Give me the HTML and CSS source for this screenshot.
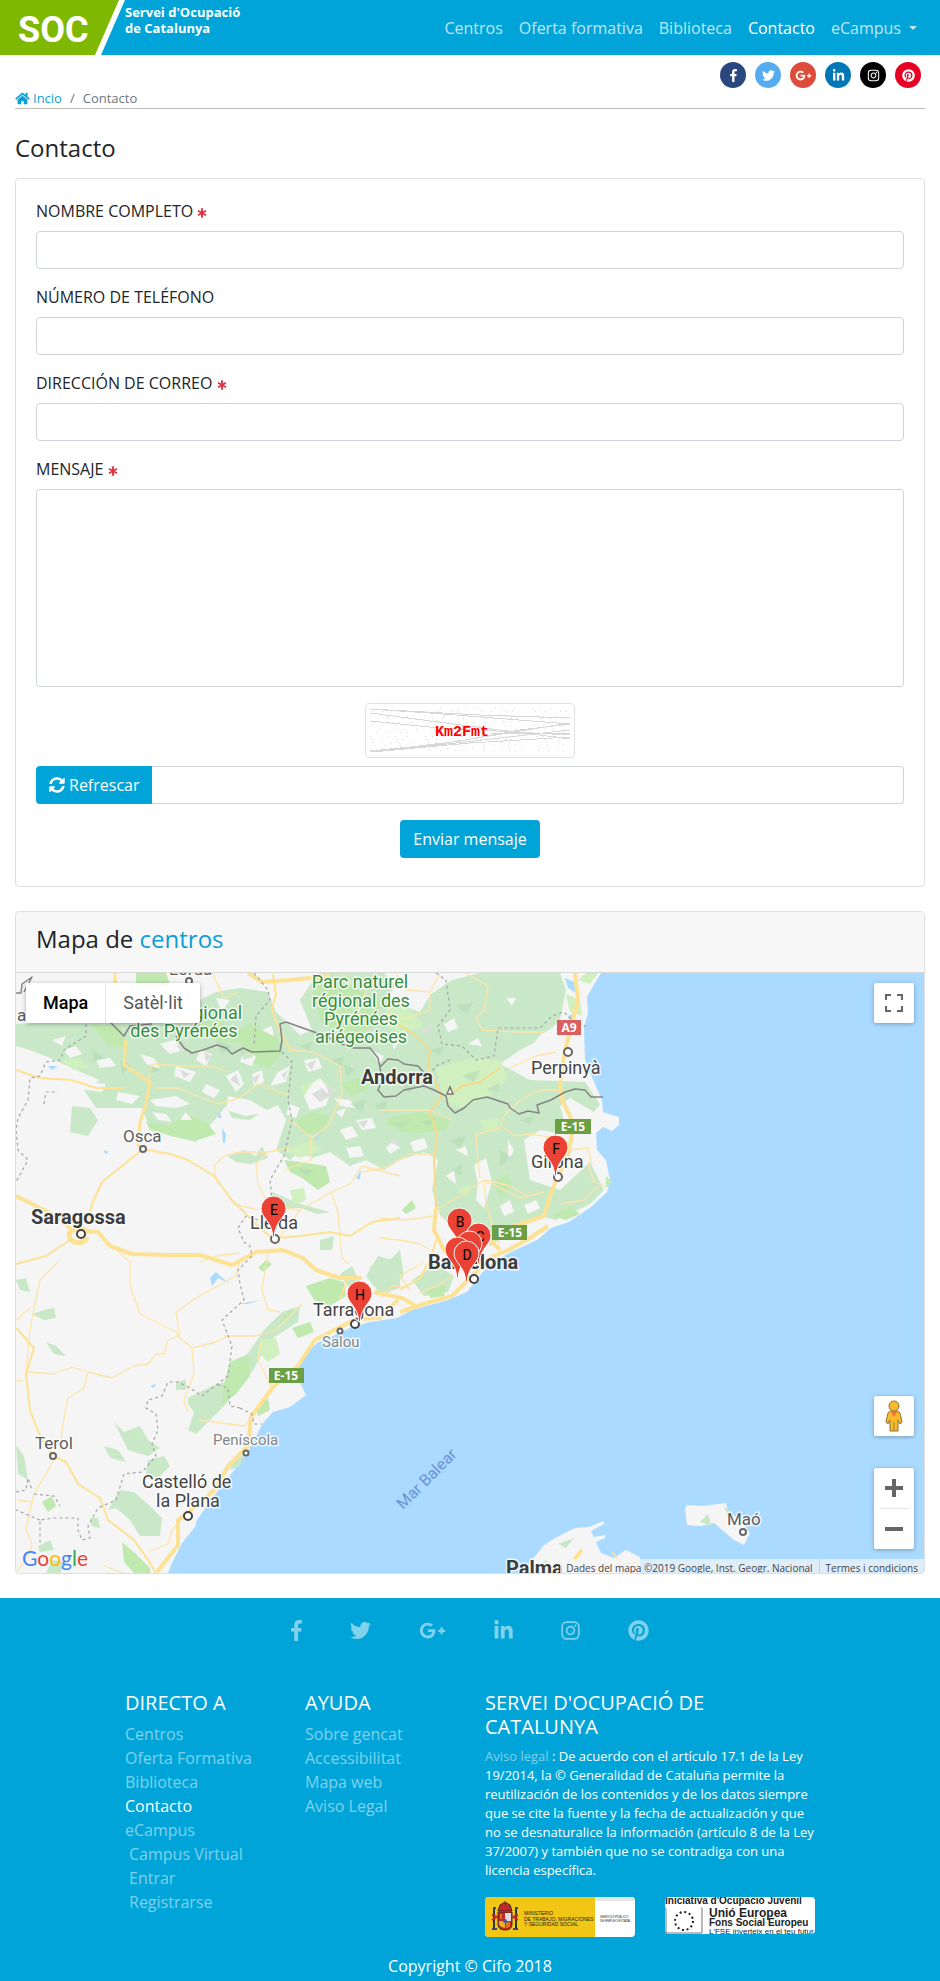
FILE: index.html
```html
<!DOCTYPE html>
<html lang="es">
<head>
<meta charset="utf-8">
<meta name="viewport" content="width=device-width, initial-scale=1">
<title>Contacto</title>
<link rel="stylesheet" href="styles.css">
</head>
<body>
<svg class="sprite" aria-hidden="true">
  <symbol id="i-facebook" viewBox="0 0 264 512"><path d="M76.7 512V283H0v-91h76.7v-71.7C76.7 42.4 124.3 0 193.8 0c33.3 0 61.9 2.5 70.2 3.6V85h-48.2c-37.8 0-45.1 18-45.1 44.3V192H256l-11.7 91h-73.6v229"/></symbol>
  <symbol id="i-twitter" viewBox="0 0 512 512"><path d="M459.37 151.716c.325 4.548.325 9.097.325 13.645 0 138.72-105.583 298.558-298.558 298.558-59.452 0-114.68-17.219-161.137-47.106 8.447.974 16.568 1.299 25.34 1.299 49.055 0 94.213-16.568 130.274-44.832-46.132-.975-84.792-31.188-98.112-72.772 6.498.974 12.995 1.624 19.818 1.624 9.421 0 18.843-1.3 27.614-3.573-48.081-9.747-84.143-51.98-84.143-102.985v-1.299c13.969 7.797 30.214 12.67 47.431 13.319-28.264-18.843-46.781-51.005-46.781-87.391 0-19.492 5.197-37.36 14.294-52.954 51.655 63.675 129.3 105.258 216.365 109.807-1.624-7.797-2.599-15.918-2.599-24.04 0-57.828 46.782-104.934 104.934-104.934 30.213 0 57.502 12.67 76.67 33.137 23.715-4.548 46.456-13.32 66.599-25.34-7.798 24.366-24.366 44.833-46.132 57.827 21.117-2.273 41.584-8.122 60.426-16.243-14.292 20.791-32.161 39.308-52.628 54.253z"/></symbol>
  <symbol id="i-google" viewBox="0 0 640 512"><path d="M386.061 228.496c1.834 9.692 3.143 19.384 3.143 31.956C389.204 370.205 315.599 448 204.8 448c-106.084 0-192-85.915-192-192s85.916-192 192-192c51.864 0 95.083 18.859 128.611 50.292l-52.126 50.03c-14.145-13.621-39.028-29.599-76.485-29.599-65.484 0-118.92 54.221-118.92 121.277 0 67.056 53.436 121.277 118.92 121.277 75.961 0 104.513-54.745 108.965-82.773H204.8v-66.009h181.261zm185.406 6.437V179.2h-56.001v55.733h-55.733v56.001h55.733v55.733h56.001v-55.733H627.2v-56.001h-55.733z"/></symbol>
  <symbol id="i-linkedin" viewBox="0 0 448 512"><path d="M100.28 448H7.4V148.9h92.88zM53.79 108.1C24.09 108.1 0 83.5 0 53.8a53.79 53.79 0 0 1 107.58 0c0 29.7-24.1 54.3-53.79 54.3zM447.9 448h-92.68V302.4c0-34.7-.7-79.2-48.29-79.2-48.29 0-55.69 37.7-55.69 76.7V448h-92.78V148.9h89.08v40.8h1.3c12.4-23.5 42.69-48.3 87.88-48.3 94 0 111.28 61.9 111.28 142.3V448z"/></symbol>
  <symbol id="i-instagram" viewBox="0 0 448 512"><path d="M224.1 141c-63.6 0-114.9 51.3-114.9 114.9s51.3 114.9 114.9 114.9S339 319.5 339 255.9 287.7 141 224.1 141zm0 189.6c-41.1 0-74.7-33.5-74.7-74.7s33.5-74.7 74.7-74.7 74.7 33.5 74.7 74.7-33.6 74.7-74.7 74.7z"/><circle cx="343.7" cy="136.3" r="26.8"/><rect x="20" y="52" width="408" height="408" rx="110" fill="none" stroke="currentColor" stroke-width="40"/></symbol>
  <symbol id="i-pinterest" viewBox="0 0 496 512"><path d="M496 256c0 137-111 248-248 248-25.6 0-50.2-3.9-73.4-11.1 10.1-16.5 25.2-43.5 30.8-65 3-11.6 15.4-59 15.4-59 8.1 15.4 31.7 28.5 56.8 28.5 74.8 0 128.7-68.8 128.7-154.3 0-81.9-66.9-143.2-152.9-143.2-107 0-163.9 71.8-163.9 150.1 0 36.4 19.4 81.7 50.3 96.1 4.7 2.2 7.2 1.2 8.3-3.3.8-3.4 5-20.3 6.9-28.1.6-2.5.3-4.7-1.7-7.1-10.1-12.5-18.3-35.3-18.3-56.6 0-54.7 41.4-107.6 112-107.6 60.9 0 103.6 41.5 103.6 100.9 0 67.1-33.9 113.6-78 113.6-24.3 0-42.6-20.1-36.7-44.8 7-29.5 20.5-61.3 20.5-82.6 0-19-10.2-34.9-31.4-34.9-24.9 0-44.9 25.7-44.9 60.2 0 22 7.4 36.8 7.4 36.8s-24.5 103.8-29 123.2c-5 21.4-3 51.6-.9 71.2C65.4 450.9 0 361.1 0 256 0 119 111 8 248 8s248 111 248 248z"/></symbol>
  <symbol id="i-home" viewBox="0 0 576 512"><path d="M280.37 148.26L96 300.11V464a16 16 0 0 0 16 16l112.06-.29a16 16 0 0 0 15.92-16V368a16 16 0 0 1 16-16h64a16 16 0 0 1 16 16v95.64a16 16 0 0 0 16 16.05L464 480a16 16 0 0 0 16-16V300L295.67 148.26a12.19 12.19 0 0 0-15.3 0zM571.6 251.47L488 182.56V44.05a12 12 0 0 0-12-12h-56a12 12 0 0 0-12 12v72.61L318.47 43a48 48 0 0 0-61 0L4.34 251.47a12 12 0 0 0-1.6 16.9l25.5 31A12 12 0 0 0 45.15 301l235.22-193.74a12.19 12.19 0 0 1 15.3 0L530.9 301a12 12 0 0 0 16.9-1.6l25.5-31a12 12 0 0 0-1.7-16.93z"/></symbol>
  <symbol id="i-sync" viewBox="0 0 512 512"><path d="M370.72 133.28C339.458 104.008 298.888 87.962 255.848 88c-77.458.068-144.328 53.178-162.791 126.85-1.344 5.363-6.122 9.15-11.651 9.15H24.103c-7.498 0-13.194-6.807-11.807-14.176C33.933 94.924 134.813 8 256 8c66.448 0 126.791 26.136 171.315 68.685L463.03 40.97C478.149 25.851 504 36.559 504 57.941V192c0 13.255-10.745 24-24 24H345.941c-21.382 0-32.09-25.851-16.971-40.971l41.75-41.749zM32 296h134.059c21.382 0 32.09 25.851 16.971 40.971l-41.75 41.75c31.262 29.273 71.835 45.319 114.876 45.28 77.418-.07 144.315-53.144 162.787-126.849 1.344-5.363 6.122-9.15 11.651-9.15h57.304c7.498 0 13.194 6.807 11.807 14.176C478.067 417.076 377.187 504 256 504c-66.448 0-126.791-26.136-171.315-68.685L48.97 471.03C33.851 486.149 8 475.441 8 454.059V320c0-13.255 10.745-24 24-24z"/></symbol>
  <symbol id="i-asterisk" viewBox="0 0 10 10"><path d="M5 0.3V9.7M1 2.7L9 7.3M9 2.7L1 7.3" fill="none" stroke="currentColor" stroke-width="1.9"/></symbol>
  <symbol id="pin" viewBox="0 0 27 43"><path d="M13.500 1A12.500 12.500 0 0 1 26 13.500C26 23 14.800 26 14.200 42H12.800C12.200 26 1 23 1 13.500A12.500 12.500 0 0 1 13.500 1z" fill="#ea4335" stroke="#fff" stroke-width="1"/></symbol>
</svg>

<header class="header">
  <a class="brand" href="#" aria-label="Servei d'Ocupació de Catalunya">
    <svg class="brand-mark" viewBox="0 0 125 55" aria-hidden="true">
      <path d="M0 0H125L101 55H0z" fill="#fff"/><path d="M0 0H119L95 55H0z" fill="#7fb800"/>
      <text x="18" y="42" class="brand-soc">SOC</text>
    </svg>
    <span class="brand-name">Servei d'Ocupació<br>de Catalunya</span>
  </a>
  <nav class="nav">
    <a href="#">Centros</a>
    <a href="#">Oferta formativa</a>
    <a href="#">Biblioteca</a>
    <a href="#" class="active">Contacto</a>
    <a href="#" class="dropdown">eCampus</a>
  </nav>
</header>

<main class="page">
  <div class="social">
    <a href="#" class="fb" aria-label="Facebook"><svg><use href="#i-facebook"/></svg></a>
    <a href="#" class="tw" aria-label="Twitter"><svg><use href="#i-twitter"/></svg></a>
    <a href="#" class="gp" aria-label="Google+"><svg><use href="#i-google"/></svg></a>
    <a href="#" class="li" aria-label="LinkedIn"><svg><use href="#i-linkedin"/></svg></a>
    <a href="#" class="ig" aria-label="Instagram"><svg><use href="#i-instagram"/></svg></a>
    <a href="#" class="pt" aria-label="Pinterest"><svg><use href="#i-pinterest"/></svg></a>
  </div>
  <nav class="breadcrumb" aria-label="Ruta">
    <a href="#"><svg><use href="#i-home"/></svg>Incio</a><span>/</span><span>Contacto</span>
  </nav>
  <h1 class="title">Contacto</h1>

  <form class="card form">
    <div class="group"><label for="nombre">NOMBRE COMPLETO <svg class="req"><use href="#i-asterisk"/></svg></label><input id="nombre" type="text" required></div>
    <div class="group"><label for="tel">NÚMERO DE TELÉFONO</label><input id="tel" type="tel"></div>
    <div class="group"><label for="correo">DIRECCIÓN DE CORREO <svg class="req"><use href="#i-asterisk"/></svg></label><input id="correo" type="email" required></div>
    <div class="group"><label for="mensaje">MENSAJE <svg class="req"><use href="#i-asterisk"/></svg></label><textarea id="mensaje" required></textarea></div>
    <div class="captcha">
      <svg viewBox="0 0 200 45" role="img" aria-label="Captcha">
        <g fill="none" stroke="#d8d8d8" stroke-width="1" shape-rendering="crispEdges">
          <path d="M0 1L110 7L200 10M0 1L60 5L200 16M0 5L60 13L200 31M0 13L70 20L200 27M0 43L70 36L200 15M0 44L60 38L200 22M2 44L100 35L200 29M0 44L90 33L150 22L200 16M120 25H200"/>
        </g>
        <g fill="none" stroke="#dadada" stroke-width="1" shape-rendering="crispEdges">
          <path stroke-dasharray="1 9 1 14 1 5 1 22" d="M3 3H198M8 10H198M1 17H196M6 24H198M2 31H198M5 37H198M60 42H198"/>
          <path stroke-dasharray="1 17 1 6 1 11" d="M70 0H190M0 8H198M4 14H150M9 21H198M0 28H198M3 34H198M40 40H198"/>
        </g>
        <text x="65" y="28" class="captcha-text">Km2Fmt</text>
      </svg>
    </div>
    <div class="input-row">
      <button type="button" class="btn"><svg><use href="#i-sync"/></svg>Refrescar</button>
      <input type="text" aria-label="Texto del captcha">
    </div>
    <button type="submit" class="btn send">Enviar mensaje</button>
  </form>

  <section class="card map-card">
    <h2 class="map-title">Mapa de <a href="#">centros</a></h2>
    <div class="map">
      <svg class="map-canvas" viewBox="16 973 908 600" preserveAspectRatio="xMidYMid slice" role="img" aria-label="Mapa de Catalunya">
        <rect x="-500" y="973" width="1900" height="600" fill="#aadaff"/>
        <path fill="#f5f5f5" d="M-500 973H601L592 988L587 997L588 1013L584 1027L585 1060L594 1082L602 1100L603 1112L619 1117V1125L612 1131L603 1127L596 1133L597 1150L606 1160L610 1180L607 1192L591 1207L569 1222L551 1228L537 1240L509 1253L491 1263L482 1273L467 1292L448 1300L412 1310L397 1318L370 1322L350 1328L333 1336L317 1343L305 1354L297 1370L302 1387L306 1395L290 1407L273 1412L263 1423L247 1453L232 1473L213 1497L197 1520L195 1527L182 1543L172 1563L168 1573H-500z"/>
        <path fill="#f5f5f5" d="M523 1573L532 1560L544 1545L555 1538L575 1528L589 1527L604 1521V1524L591 1531L594 1537L605 1535V1538L596 1542L601 1553L614 1558L626 1550L640 1557V1573zM685 1508L687 1505L703 1506L726 1503L728 1512L741 1520L750 1533L744 1545L734 1540L714 1523L701 1526L687 1525z"/>
        <!-- woodland -->
        <g fill="#c8e8c8">
          <path d="M16 1024L60 1022L110 1015L170 1010L200 1000L216 992L240 988L268 992L276 1012L300 1035L312 1030L300 1000L318 973H384L395 985L386 1000L420 1012L430 995L452 980L480 973H560L566 990L560 1020L540 1040L520 1050L500 1064L530 1080L585 1082L600 1104L594 1112L570 1098L560 1106L568 1135L540 1130L524 1140L530 1180L560 1190L590 1162L604 1190L590 1204L556 1220L540 1216L520 1228L490 1246L476 1228L462 1236L440 1215L432 1190L438 1160L424 1152L400 1160L384 1170L366 1160L350 1166L330 1152L312 1158L300 1150L290 1160L276 1150L286 1120L278 1105L262 1112L250 1120L232 1118L226 1106L208 1128L196 1142L170 1136L148 1124L142 1108L96 1108L84 1090L100 1080L76 1070L50 1058L30 1050L16 1046z"/>
          <path d="M72 1106L90 1108L98 1120L88 1136L70 1132zM228 1156L244 1150L256 1156L262 1146L268 1158L250 1164L236 1162zM272 1192L300 1204L330 1212L318 1214L300 1208L276 1208zM16 1280L26 1278L30 1292L20 1290zM32 1314L44 1310L54 1308L56 1318L44 1320zM46 1342L56 1346L66 1356L54 1354zM114 1422L124 1432L140 1426L148 1440L160 1448L148 1456L128 1450zM104 1446L118 1450L126 1462L110 1458zM148 1460L164 1456L170 1466L158 1478L146 1474zM120 1490L134 1492L150 1506L162 1518L160 1536L140 1536L130 1520L116 1508L108 1510zM90 1518L98 1518L100 1528L92 1526zM16 1445L24 1456L28 1480L18 1474zM188 1398L212 1386L232 1380L246 1356L264 1330L282 1312L300 1306L298 1322L270 1340L252 1372L224 1406L196 1434L188 1430L194 1412L188 1404zM370 1266L392 1258L400 1250L404 1276L388 1294L374 1280zM412 1280L436 1264L454 1276L448 1292L424 1296zM232 1464L246 1452L240 1466L230 1470zM176 1382L186 1380V1390L176 1390zM38 1546L50 1540L54 1550L40 1552zM52 1560L66 1562L60 1573H46zM340 1274L352 1266L360 1282L350 1290zM320 1240L334 1236L332 1250L320 1250zM366 1276L378 1256L400 1262V1288L380 1294zM724 1506L732 1514L728 1520zM700 1522L708 1514L712 1526zM558 1544L574 1538L566 1548zM532 1573L546 1560L552 1573z"/>
        </g>
        <!-- bright woodland -->
        <g fill="#bfe9ae">
          <path d="M92 1024L120 1026L128 1048L108 1046zM196 1024L220 1018L232 1034L250 1024L276 1036L284 1050L270 1068L250 1062L240 1044L216 1040L196 1032zM146 1122L170 1126L186 1114L206 1122L216 1134L198 1140L172 1136L150 1130zM284 1160L300 1162L326 1166L330 1182L318 1190L302 1178L290 1172zM312 985L340 980L380 1000L376 1024L350 1040L320 1020zM388 1118L420 1112L450 1120L446 1130L410 1134L388 1126zM494 1182L508 1174L512 1186L500 1198zM552 1216L570 1206L580 1214L566 1220zM306 1286L330 1278L344 1282L346 1296L330 1306L314 1300zM230 1362L248 1354L250 1376L236 1394L222 1404L224 1384zM256 1408L268 1398L270 1410L258 1416zM122 1542L136 1554L150 1568V1573H134L124 1562zM42 1502L52 1496L56 1506L48 1512zM258 1268L266 1260L272 1264L264 1272zM292 1328L310 1322L314 1332L298 1338zM428 1290L446 1284L444 1296L430 1298zM280 1320L292 1308L290 1318zM606 1176L612 1182L606 1188zM446 1214L460 1208L462 1224L450 1222zM402 1210L412 1200L416 1208L406 1214zM296 1120L312 1112L330 1116L322 1132L304 1134zM340 1084L358 1078L370 1088L352 1096zM136 973H166L170 984L150 992L136 984z"/>
        </g>
        <g fill="#d0f0c0">
          <path d="M436 1068L470 1058L500 1060L508 1078L490 1096L460 1108L444 1100zM300 1086L320 1078L336 1090L322 1104L306 1100zM480 1120L500 1118L496 1132L484 1130zM586 973H598L590 984L578 980zM290 1190L304 1188L306 1200L294 1206zM260 1340L276 1338L280 1354L268 1362L258 1352zM284 1150L312 1140L322 1150L300 1158zM456 1190L470 1184L468 1198zM60 1060L80 1058L90 1068L74 1070zM386 1004L410 1010L424 1026L400 1034L384 1024zM566 994L580 1000L582 1016L570 1012z"/>
        </g>
        <!-- clearings and peaks -->
        <g fill="#f5f5f5">
          <path d="M312 1084L320 1078L330 1092L326 1106L310 1110L304 1096zM226 1076L238 1070L244 1084L236 1092zM278 1072L290 1066L286 1082L270 1086zM200 1050L212 1054L206 1066L196 1060zM160 1044L174 1040L184 1050L170 1054zM150 1100L176 1096L190 1104L176 1108L156 1106zM118 1092L140 1096L132 1104L116 1100zM228 1096L250 1100L270 1112L246 1116L226 1110zM52 1040L66 1036L62 1046zM84 1082L106 1084L102 1092L86 1090zM340 1130L352 1126L358 1136L346 1140zM398 978L424 975L430 990L410 1004L396 996zM444 1024L454 1018L458 1028L448 1032zM506 998L516 998L512 1006zM540 1035L556 1026L576 1044L582 1062L566 1070L552 1058L530 1048zM522 1052L538 1050L534 1060zM568 1118L584 1110L594 1130L584 1142L592 1160L578 1158L572 1140zM474 1165L486 1158L492 1182L484 1208L476 1200L478 1184zM420 1168L434 1160L430 1180L412 1196L398 1200L404 1180zM508 1140L514 1150L508 1162zM524 1205L536 1200L540 1208L528 1214zM400 1224L420 1222L428 1240L420 1250L404 1240zM336 1112L346 1108L342 1118zM370 1050L384 1056L380 1064zM386 1148L394 1140L400 1148L390 1154zM262 1030L272 1026L274 1036zM216 998L230 1000L222 1012z"/>
          <path d="M140 1054L154 1058L160 1068L148 1066zM176 1066L196 1072L190 1082L174 1076zM206 1084L220 1090L214 1098L202 1092zM96 1060L110 1058L116 1066L100 1068zM64 1050L76 1046L82 1054L70 1058zM252 1074L262 1070L264 1082L254 1086zM290 1104L300 1108L296 1118L286 1114zM334 1098L350 1100L356 1108L340 1106zM356 1120L372 1118L376 1128L362 1130zM346 1148L360 1146L364 1156L350 1158zM180 1120L186 1112L192 1120zM152 1112L166 1114L172 1122L158 1120zM244 1052L256 1056L252 1066L240 1062zM304 1060L318 1058L322 1068L308 1072zM410 1142L424 1138L428 1148L414 1152zM456 1150L466 1146L468 1156zM500 1206L510 1200L514 1212L504 1216zM446 1176L454 1170L456 1184zM468 1044L478 1038L482 1046zM390 1034L400 1040L394 1050z"/>
        </g>
        <g fill="#dcdedc">
          <path d="M312 1094L322 1088L330 1096L320 1102zM230 1080L236 1074L240 1086zM390 1142L396 1138L398 1146zM282 1074L288 1070L284 1080zM204 1052L212 1056L206 1062zM420 1030L432 1026L428 1036zM176 1046L184 1044L182 1052zM252 1078L260 1074L256 1084zM306 1064L316 1060L312 1070zM180 1070L190 1074L184 1078zM358 1122L368 1120L364 1128zM326 1084L334 1090L330 1100z"/>
        </g>
        <g fill="#b4dab4" opacity=".6">
          <path d="M430 1050L444 1046L440 1056zM456 1006L474 1002L466 1014zM400 1080L416 1086L408 1094zM350 1104L366 1100L362 1112zM450 1140L466 1136L460 1148zM500 1150L512 1158L500 1166zM330 1060L344 1056L342 1066zM240 1050L254 1056L244 1060zM92 1050L104 1058L94 1062zM148 1064L162 1070L150 1074zM520 1120L534 1116L530 1124zM452 1170L462 1164L462 1176zM462 1076L480 1070L474 1082zM486 1090L500 1082L498 1092zM392 1124L410 1120L402 1128zM420 1122L436 1118L430 1126zM216 1040L232 1046L222 1054zM120 1060L132 1066L122 1074zM300 1046L312 1042L310 1052zM344 1064L356 1070L346 1076zM374 1106L388 1100L384 1112zM298 1168L314 1170L306 1176zM320 1008L334 1002L330 1014zM350 1020L366 1014L360 1026z"/>
        </g>
        <g fill="#aadaff">
          <path d="M48 1066H58L52 1070zM222 1128L226 1134L225 1143H223zM219 1112L222 1118L218 1118zM316 1138L320 1132L318 1140zM356 1178L361 1170L360 1180zM104 1150L109 1152L105 1154zM210 1278L216 1272L220 1276L230 1284L218 1278L212 1286zM240 1304L260 1300L248 1304zM150 1386L156 1384L154 1388zM565 978L574 982L578 994L568 988zM568 1016L573 1014L572 1026z"/>
        </g>
        <!-- minor roads -->
        <g fill="none" stroke="#fde5a8" stroke-width="1.300" stroke-linejoin="round">
          <path d="M148 1080L152 1064L180 1066L212 1066L228 1072M155 1088L178 1088L192 1094L218 1104L240 1098L258 1084L290 1096M212 973L224 998L238 992M290 1050L314 1052L340 1066L342 1092L330 1124L312 1138L290 1120M214 1166L224 1156L240 1152L268 1152L290 1148M268 1152L256 1164L258 1184L270 1206L300 1210M214 1166L216 1178L234 1204L258 1210M300 1210L332 1192L350 1184L362 1166L400 1176M311 1138V1160L284 1170M332 1194L338 1212L342 1258L348 1264M300 1210L290 1224L280 1236M240 1253L216 1256L200 1262M268 1252L262 1290L268 1310L280 1312M58 1262L40 1280L34 1308L30 1330L26 1373M97 1232L122 1255L130 1262V1285L140 1314L176 1332L180 1338L192 1348L216 1342L228 1336M180 1338L176 1312L196 1298L214 1288L236 1276L240 1260M192 1348L194 1374L184 1400L188 1412M16 1320L30 1308M16 1381H22M28 1372L54 1374L72 1367L88 1372L112 1378L134 1366L148 1364L156 1354L164 1354L168 1340L178 1336M88 1372L84 1388L68 1398L62 1430L60 1450M54 1460L34 1494L32 1502L18 1500M32 1502L26 1530L32 1544L28 1556L16 1573M200 1420L244 1426L250 1420M224 1336L256 1336L276 1330L302 1304M262 1338L258 1360L272 1388M148 1552L168 1544L172 1530L184 1516M104 1566L124 1573"/>
          <path d="M396 973L406 990L430 992L440 973M430 992V1010L400 1020L388 1014M466 973L488 986L484 1010L476 1018L482 1030L518 1032L546 1032M452 1120L430 1110L400 1110L380 1110M476 1134L478 1160L480 1178M476 1134L500 1128L504 1116L520 1100L540 1090L560 1090M504 1128L516 1136L530 1134L556 1138M434 1154L410 1154L384 1168L362 1172M380 1218L404 1220L434 1216M380 1238L400 1240L420 1244L430 1250M438 1208L460 1196L484 1180L520 1198L544 1192M484 1180L486 1204L494 1230L500 1244M486 1180L510 1186L526 1196M560 1204L584 1200L598 1186M556 1052L536 1056L510 1068M568 1150L588 1148L592 1164M588 1164L594 1182L606 1186M410 1290L400 1276L414 1268L424 1262M380 1298L392 1286L410 1288M418 1294L440 1284L452 1276M612 1552L622 1564L640 1562M356 1020L366 990M340 973L356 988L366 986"/>
        </g>
        <!-- main roads -->
        <g fill="none" stroke="#fde293" stroke-linejoin="round">
          <path stroke-width="3" d="M115 973V986M126 1040L124 1065L150 1082L146 1104L140 1122L138 1145L143 1149"/>
          <path stroke-width="2" d="M143 1149L122 1166L102 1182L92 1204L88 1226M143 1149L170 1154L188 1160L214 1176L232 1200L262 1230L275 1240M16 1070L40 1078L72 1080L96 1088L124 1088M278 1238L300 1236L330 1232L350 1236L372 1222L400 1218M70 1240L46 1256L16 1264M16 1328L34 1348L26 1374L30 1410L40 1436L53 1456L66 1462L78 1484L100 1498L108 1520L134 1540L148 1560L156 1573M340 1298L348 1278M400 1290L420 1278L430 1260L436 1240M273 974L276 994L272 1010L282 1036L292 1052"/>
          <path stroke-width="2" stroke="#f8d98a" d="M398 1024L414 1034L430 1050L428 1068L442 1096L430 1112L437 1134L434 1160L436 1208M450 1096L462 1086L480 1082L500 1068"/>
          <path stroke-width="4" d="M16 1196L36 1206L56 1216L72 1230L98 1232L110 1246L132 1254L170 1255L200 1255L216 1260L232 1265L256 1252L283 1250L303 1258L316 1270L340 1278L362 1278M374 1292L402 1298L416 1306M157 1572L178 1545V1520L204 1500L216 1488L228 1466L248 1446L251 1417L273 1387L297 1367L315 1340L340 1327L357 1319L380 1318L398 1300M400 1312L430 1302L452 1296L470 1278L490 1258L508 1250L530 1238L548 1226M500 1250L490 1240L508 1228L544 1216L552 1190L568 1155L574 1124L562 1100L560 1085L565 1050L573 1020L578 1000L575 973M436 1208L434 1230L444 1250L464 1270M248 973L262 982L290 980L330 976M574 1560L582 1550"/>
          <path stroke-width="5" d="M87 1234A9 7 0 1 0 87 1237"/>
        </g>
        <!-- borders -->
        <g fill="none" stroke="#858585" stroke-width="1.500" stroke-linejoin="round">
          <path d="M16 993H21L22 984L32 977L24 992M110 1022L124 1036L130 1026L152 1024M176 1036L184 1048L192 1053L203 1050L217 1045L226 1048L232 1054L243 1048L252 1052L280 1051L282 1040L280 1024L286 1022L300 1027L320 1034L342 1044L354 1048L370 1048L378 1058L380 1067L388 1059L398 1060L404 1064L418 1066L426 1075L424 1086L404 1090L396 1096L384 1097L378 1090L382 1080L380 1067M424 1086L434 1090L446 1096L448 1106L455 1113L464 1108L473 1100L487 1097L508 1104L510 1108L519 1114L528 1111L539 1113L537 1105L551 1100L565 1092L575 1089L585 1090L591 1097L603 1097"/>
          <path stroke="#a5a5a5" stroke-width="1.200" stroke-dasharray="3 3" d="M86 1024V1036L64 1050L60 1060L46 1062L40 1076L30 1078L28 1100L18 1118L16 1130L18 1150L28 1160L16 1182M44 1104L46 1092L58 1092M254 973L268 990L270 1000L256 1016L254 1046M282 1052L292 1062L288 1100L292 1120L284 1156L270 1180L272 1200M258 1220L246 1216L238 1228L244 1242L250 1246L252 1256L238 1270L240 1284L244 1300L222 1320L232 1346L228 1376L202 1396L190 1388L178 1382L168 1382L162 1396L148 1400L146 1408L156 1414L158 1430L152 1444L156 1456L142 1472L124 1474L116 1500L98 1508L88 1526L90 1538L82 1540L78 1530L78 1518L54 1518L40 1520L40 1545M40 1520L16 1510M34 1494L54 1496L60 1506M240 1408L230 1406L228 1388L216 1384M240 1408L252 1414L254 1424L262 1424M436 973L446 980L450 1010L438 1026L442 1044L462 1046L476 1060L494 1056L498 1028L540 1028L552 1016L564 1012L576 1024L590 1027M16 1492L26 1490L28 1478L32 1490M450 1060L436 1066L430 1074"/>
        </g>
        <!-- towns -->
        <g fill="#fff" stroke="#666" stroke-width="2">
          <circle cx="189" cy="981" r="3"/><circle cx="143" cy="1149" r="3"/><circle cx="275" cy="1239" r="4"/><circle cx="340" cy="1331" r="2.500"/><circle cx="246" cy="1453" r="2.500"/><circle cx="53" cy="1456" r="3"/><circle cx="568" cy="1052" r="4"/><circle cx="558" cy="1177" r="4"/><circle cx="743" cy="1532" r="3"/>
        </g>
        <g fill="#fff" stroke="#444" stroke-width="2">
          <circle cx="81" cy="1234" r="4"/><circle cx="188" cy="1516" r="4"/><circle cx="355" cy="1324" r="4"/><circle cx="474" cy="1279" r="4"/>
          <path stroke="#777" stroke-width="1.500" d="M450 1087L453 1094H447z"/>
        </g>
        <g class="lbl park" text-anchor="middle">
          <text x="360" y="988">Parc naturel</text><text x="361" y="1007">régional des</text><text x="361" y="1025">Pyrénées</text><text x="361" y="1043">ariégeoises</text>
          <text x="180" y="1019">naturel régional</text><text x="184" y="1037">des Pyrénées</text>
        </g>
        <g class="lbl city">
          <text x="31" y="1224">Saragossa</text><text x="361" y="1084">Andorra</text><text x="428" y="1269">Barcelona</text><text x="506" y="1575">Palma</text>
        </g>
        <g class="lbl town">
          <text x="531" y="1074">Perpinyà</text><text x="531" y="1168">Girona</text><text x="250" y="1229">Lleida</text><text x="313" y="1316">Tarragona</text><text x="142" y="1488">Castelló de</text><text x="156" y="1507">la Plana</text>
        </g>
        <g class="lbl minor">
          <text x="123" y="1142">Osca</text><text x="35" y="1449">Terol</text><text x="727" y="1525">Maó</text><text x="169" y="975">Lorda</text><text x="17" y="1021">a</text>
        </g>
        <g class="lbl small"><text x="322" y="1347">Salou</text><text x="213" y="1445">Peníscola</text></g>
        <text class="sea" transform="translate(403 1510) rotate(-45)">Mar Balear</text>
        <g class="shield">
          <rect x="557" y="1020" width="24" height="15" fill="#d9605f"/><text x="569" y="1032">A9</text>
          <g fill="#6a9f43"><rect x="555" y="1119" width="36" height="15"/><rect x="492" y="1225" width="35" height="15"/><rect x="269" y="1368" width="35" height="15"/></g>
          <text x="573" y="1131">E-15</text><text x="510" y="1237">E-15</text><text x="286" y="1380">E-15</text>
        </g>
        <g class="pins">
          <use href="#pin" x="260" y="1195" width="27" height="43"/><text x="274" y="1215">E</text>
          <use href="#pin" x="346" y="1280" width="27" height="43"/><text x="360" y="1300">H</text>
          <use href="#pin" x="542" y="1134" width="27" height="43"/><text x="556" y="1154">F</text>
          <use href="#pin" x="446" y="1207" width="27" height="43"/><text x="460" y="1227">B</text>
          <use href="#pin" x="465" y="1222" width="27" height="43"/><text x="480" y="1242">C</text>
          <use href="#pin" x="456" y="1230" width="27" height="43"/>
          <use href="#pin" x="444" y="1236" width="27" height="43"/>
          <use href="#pin" x="453" y="1240" width="27" height="43"/><text x="467" y="1260">D</text>
        </g>
        <text x="22" y="1566" class="google"><tspan fill="#4285f4">G</tspan><tspan fill="#ea4335">o</tspan><tspan fill="#fbbc05">o</tspan><tspan fill="#4285f4">g</tspan><tspan fill="#34a853">l</tspan><tspan fill="#ea4335">e</tspan></text>
      </svg>
      <div class="map-type"><button type="button" class="on">Mapa</button><button type="button">Satèl·lit</button></div>
      <button type="button" class="ctl full" aria-label="Pantalla completa"><svg viewBox="0 0 18 18"><path d="M0 0H6V2H2V6H0zM12 0H18V6H16V2H12zM0 12H2V16H6V18H0zM16 12H18V18H12V16H16z"/></svg></button>
      <div class="map-side">
        <button type="button" class="ctl" aria-label="Street View"><svg class="pegman" viewBox="0 0 18 32"><path d="M5 11H13L15 13L17 22L15 24L13 20V31H5V20L3 24L1 22L3 13z" fill="#fbb829" stroke="#8a7540"/><path d="M9 22V31" stroke="#a5802c"/><circle cx="9" cy="6" r="5" fill="#fbb829" stroke="#8a7540"/><path d="M6 12H12L9 17z" fill="#e8762c"/></svg></button>
        <div class="zoom">
          <button type="button" aria-label="Ampliar"><svg viewBox="0 0 18 18"><path d="M7 0H11V7H18V11H11V18H7V11H0V7H7z"/></svg></button>
          <button type="button" aria-label="Reducir"><svg viewBox="0 0 18 18"><path d="M0 7H18V11H0z"/></svg></button>
        </div>
      </div>
      <div class="map-legal"><span>Dades del mapa ©2019 Google, Inst. Geogr. Nacional</span><a href="#">Termes i condicions</a></div>
    </div>
  </section>
</main>

<footer class="footer">
  <div class="footer-social">
    <a href="#" aria-label="Facebook"><svg class="w11"><use href="#i-facebook"/></svg></a>
    <a href="#" aria-label="Twitter"><svg class="w21"><use href="#i-twitter"/></svg></a>
    <a href="#" aria-label="Google+"><svg class="w27"><use href="#i-google"/></svg></a>
    <a href="#" aria-label="LinkedIn"><svg class="w19"><use href="#i-linkedin"/></svg></a>
    <a href="#" aria-label="Instagram"><svg class="w19"><use href="#i-instagram"/></svg></a>
    <a href="#" aria-label="Pinterest"><svg class="w21"><use href="#i-pinterest"/></svg></a>
  </div>
  <div class="footer-cols">
    <div>
      <h2>DIRECTO A</h2>
      <ul>
        <li><a href="#">Centros</a></li><li><a href="#">Oferta Formativa</a></li><li><a href="#">Biblioteca</a></li><li><a href="#" class="active">Contacto</a></li><li><a href="#">eCampus</a></li>
        <li class="sub"><a href="#">Campus Virtual</a></li><li class="sub"><a href="#">Entrar</a></li><li class="sub"><a href="#">Registrarse</a></li>
      </ul>
    </div>
    <div>
      <h2>AYUDA</h2>
      <ul><li><a href="#">Sobre gencat</a></li><li><a href="#">Accessibilitat</a></li><li><a href="#">Mapa web</a></li><li><a href="#">Aviso Legal</a></li></ul>
    </div>
    <div>
      <h2>SERVEI D'OCUPACIÓ DE CATALUNYA</h2>
      <p class="legal"><a href="#">Aviso legal</a> : De acuerdo con el artículo 17.1 de la Ley 19/2014, la © Generalidad de Cataluña permite la reutilización de los contenidos y de los datos siempre que se cite la fuente y la fecha de actualización y que no se desnaturalice la información (artículo 8 de la Ley 37/2007) y también que no se contradiga con una licencia específica.</p>
      <div class="sponsors">
        <svg class="sepe" viewBox="0 0 150 40" role="img" aria-label="Ministerio de Trabajo">
          <rect width="150" height="40" fill="#fff"/><rect width="110" height="40" fill="#f1c615"/><rect x="110" width="40" height="4" fill="#e6e6e6"/>
          <g><path d="M15 8Q20 4 25 8L27 14H13z" fill="#c5262c" stroke="#3a2a10"/><path d="M20 4V8M18 6H22" stroke="#5a3a10"/><path d="M13 15H27V27Q27 33 20 33Q13 33 13 27z" fill="#c5262c" stroke="#4a2a20"/><path d="M20 16H26V24H20z" fill="#e4dbe0"/><path d="M14 24H20V31Q15 30 14 27z" fill="#e4b422"/><path d="M16 17V22M22 25V31M24 25V30" stroke="#f1c615"/><circle cx="20" cy="24" r="2" fill="#3b5aa0"/><path d="M9 11V31M31 11V31" stroke="#333" stroke-width="2"/><path d="M7 18L12 20L7 23M33 18L28 20L33 23" stroke="#c5262c" stroke-width="2" fill="none"/><path d="M7 32H12M28 32H33M8 11H11M30 11H33" stroke="#2f4a74" stroke-width="2"/></g>
          <g font-size="5"><text x="39" y="18">MINISTERIO</text><text x="39" y="24">DE TRABAJO, MIGRACIONES</text><text x="39" y="29">Y SEGURIDAD SOCIAL</text></g>
          <g font-size="3"><text x="115" y="21">SERVICIO PÚBLICO</text><text x="115" y="25">DE EMPLEO ESTATAL</text></g>
        </svg>
        <svg class="fse" viewBox="0 0 150 37" role="img" aria-label="Unió Europea, Fons Social Europeu">
          <rect width="150" height="37" fill="#fff"/>
          <path d="M0 11H37V36H1V11" fill="none" stroke="#777"/><path d="M1 11H36" stroke="#fff" stroke-width="2"/>
          <circle cx="19" cy="24" r="9" fill="none" stroke="#222" stroke-width="2" stroke-dasharray="2 2.710"/>
          <g font-weight="700"><text x="0" y="7" font-size="10">Iniciativa d'Ocupació Juvenil</text><text x="44" y="20" font-size="12">Unió Europea</text><text x="44" y="29" font-size="10">Fons Social Europeu</text></g>
          <text x="44" y="37" font-size="8">L'FSE inverteix en el teu futur</text>
        </svg>
      </div>
    </div>
  </div>
  <p class="copy">Copyright © Cifo 2018</p>
</footer>
</body>
</html>
```

FILE: styles.css
```css
*, *::before, *::after { box-sizing: border-box; }
body { margin: 0; background: #fff; color: #212529; font: 16px/24px "Open Sans", "Noto Sans", sans-serif; }
a { color: #0a9fd8; text-decoration: none; }
h1, h2, p, ul { margin: 0; padding: 0; font-weight: 400; }
ul { list-style: none; }
svg { fill: currentColor; }
button, input, textarea { font: inherit; color: inherit; }
.sprite { position: absolute; width: 0; height: 0; }

.header { display: flex; justify-content: space-between; min-height: 55px; padding-right: 15px; background: #00a4d8; }
.brand { display: flex; color: #fff; }
.brand-mark { width: 125px; height: 55px; }
.brand-soc { font: 700 36px Roboto, sans-serif; fill: #fff; }
.brand-name { padding-top: 4px; font-size: 13px; line-height: 16px; font-weight: 700; }
.nav { display: flex; align-items: center; }
.nav a { padding: 8px; color: rgba(255, 255, 255, .75); }
.nav a.active { color: #fff; }
.dropdown::after { content: ""; display: inline-block; margin-left: 8px; vertical-align: 4px; border: 4px solid transparent; border-top-color: currentColor; border-bottom: 0; }

.page { padding: 0 15px; }
.social { display: flex; justify-content: flex-end; gap: 9px; padding: 7px 4px 0 0; }
.social a { display: flex; align-items: center; justify-content: center; width: 26px; height: 26px; border-radius: 50%; color: #fff; }
.social svg { width: 17px; height: 13px; }
.fb { background: #2a487f; }
.tw { background: #55acee; }
.gp { background: #dd4b39; }
.li { background: #0077b5; }
.ig { background: #000; }
.pt { background: #e60023; }

.breadcrumb { display: flex; gap: 8px; border-bottom: 1px solid #bbb; font-size: 13px; line-height: 20px; color: #6c757d; }
.breadcrumb a { display: flex; align-items: center; gap: 3px; }
.breadcrumb svg { width: 15px; height: 13px; }
.title { margin: 25px 0 16px; font-size: 24px; line-height: 28px; }

.card { border: 1px solid #dfdfdf; border-radius: 4px; margin-bottom: 24px; }
.form { padding: 20px 20px 28px; }
.group { margin-bottom: 16px; }
.group label { display: block; margin-bottom: 8px; }
.req { width: 10px; height: 10px; color: #dc3545; vertical-align: -1px; }
input, textarea { display: block; width: 100%; height: 38px; padding: 6px 12px; border: 1px solid #ced4da; border-radius: 4px; background: #fff; }
textarea { height: 198px; resize: none; }
.captcha { width: 210px; margin: 0 auto 8px; padding: 4px; border: 1px solid #dee2e6; border-radius: 4px; }
.captcha svg { display: block; width: 200px; height: 45px; }
.captcha-text { font: 700 15px "Liberation Mono", monospace; fill: #f00; }
.btn { display: flex; align-items: center; gap: 4px; height: 38px; padding: 0 13px; border: 0; border-radius: 4px; background: #00a4d8; color: #fff; }
.btn svg { width: 16px; height: 16px; }
.input-row { display: flex; margin-bottom: 16px; }
.input-row .btn { border-radius: 4px 0 0 4px; }
.input-row input { flex: 1; width: auto; border-radius: 0 4px 4px 0; border-left: 0; }
.send { margin: 0 auto; }

.map-card { overflow: hidden; }
.map-title { padding: 13px 20px 19px; border-bottom: 1px solid #d8d8d8; background: #f7f7f7; font-size: 24px; line-height: 28px; }
.map { position: relative; height: 600px; overflow: hidden; font-family: Roboto, sans-serif; }
.map-canvas { display: block; width: 100%; height: 100%; }
.lbl text { paint-order: stroke; stroke: #fff; stroke-opacity: .8; stroke-width: 3px; stroke-linejoin: round; }
.park { font-size: 18px; fill: #388e3c; }
.city { font-size: 20px; font-weight: 700; fill: #3c3c3c; }
.town { font-size: 18px; fill: #444; }
.minor { font-size: 17px; fill: #5c5c5c; }
.small { font-size: 15px; fill: #80868b; }
.sea { font-size: 16px; fill: #6b93d6; }
.shield { font: 700 12px "Open Sans", sans-serif; text-anchor: middle; }
.shield text { fill: #fff; }
.pins { font-size: 14px; text-anchor: middle; fill: #000; }
.google { font: 400 21px Lato, sans-serif; }
.map button { display: flex; align-items: center; justify-content: center; padding: 0; border: 0; background: #fff; color: #666; }
.map-type { position: absolute; left: 10px; top: 10px; display: flex; height: 40px; border-radius: 2px; overflow: hidden; box-shadow: 0 1px 4px rgba(0, 0, 0, .3); }
.map .map-type button { padding: 0 17px; font-size: 18px; color: #565656; }
.map .map-type .on { border-right: 1px solid #e6e6e6; font-weight: 500; color: #000; }
.map .ctl { width: 40px; height: 40px; border-radius: 2px; box-shadow: 0 1px 4px rgba(0, 0, 0, .3); }
.ctl svg, .zoom svg { width: 18px; height: 18px; }
.ctl .pegman { height: 32px; }
.map .full { position: absolute; top: 10px; right: 10px; }
.map-side { position: absolute; right: 10px; bottom: 24px; display: grid; gap: 32px; }
.zoom { width: 40px; padding: 0 5px; border-radius: 2px; background: #fff; box-shadow: 0 1px 4px rgba(0, 0, 0, .3); }
.zoom button { width: 100%; height: 40px; }
.zoom button + button { border-top: 1px solid #e6e6e6; height: 41px; }
.map-legal { position: absolute; right: 0; bottom: 0; display: flex; height: 14px; font: 10px/18px "Open Sans", sans-serif; }
.map-legal > * { padding: 0 6px; background: rgba(245, 245, 245, .7); color: #444; }
.map-legal a { margin-left: 1px; }

.footer { padding: 22px 15px 4px; background: #00a4d8; color: #fff; }
.footer a { color: rgba(255, 255, 255, .5); }
.footer a.active { color: #fff; }
.footer-social { display: flex; justify-content: center; gap: 48px; margin-bottom: 50px; }
.footer-social svg { display: block; height: 21px; }
.w11 { width: 11px; }
.w19 { width: 19px; }
.w21 { width: 21px; }
.w27 { width: 27px; }
.footer-cols { display: grid; grid-template-columns: 1fr 1fr 2fr; max-width: 720px; margin: 0 auto 17px; }
.footer-cols > div { padding: 0 15px; }
.footer h2 { margin-bottom: 7px; font-size: 20px; line-height: 24px; }
.sub { padding-left: 4px; }
.legal { padding-top: 1px; margin-bottom: 17px; font-size: 13px; line-height: 19px; }
.sponsors { display: flex; gap: 30px; align-items: flex-start; font-family: "Liberation Sans", sans-serif; }
.sponsors svg { width: 150px; border-radius: 4px; fill: #222; }
.sepe { height: 40px; }
.fse { height: 37px; }
.copy { text-align: center; }
```
